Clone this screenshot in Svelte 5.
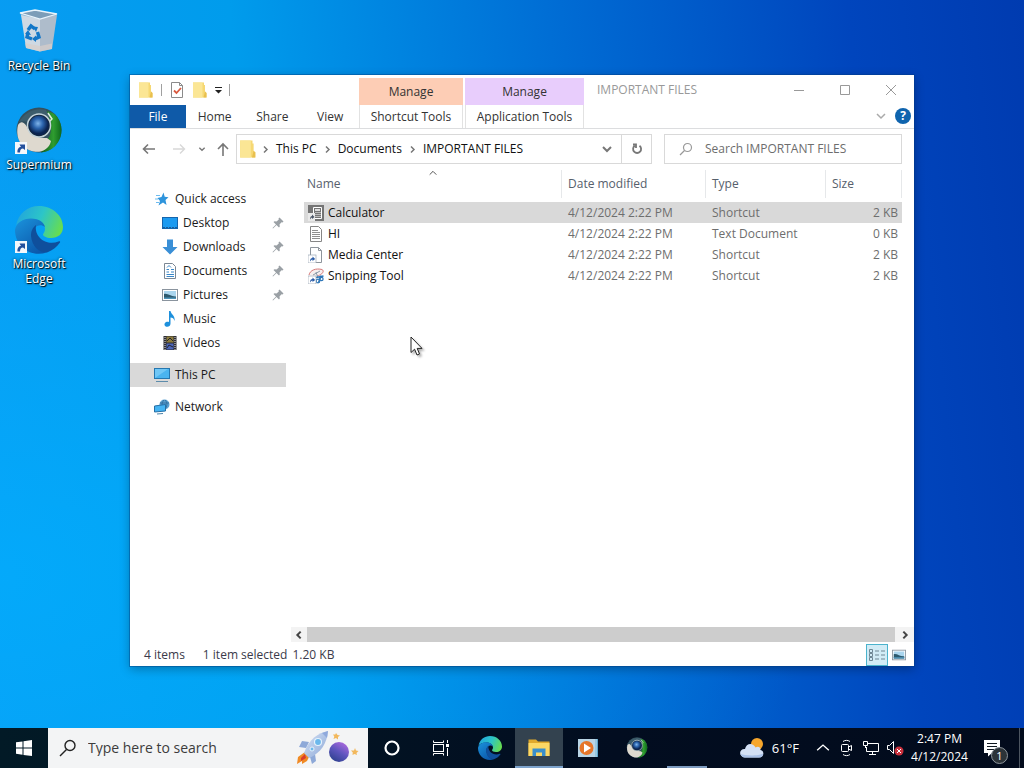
<script lang="ts">
    type Place = { name: string, icon: string, level: number, pinned?: boolean, gap?: boolean }

    const shortcuts = [
        { name: 'Recycle Bin', icon: 'bin', link: false },
        { name: 'Supermium', icon: 'supermium', link: true },
        { name: 'Microsoft Edge', icon: 'edge', link: true },
    ]

    const places: Place[] = [
        { name: 'Quick access', icon: 'star', level: 0 },
        { name: 'Desktop', icon: 'desktop', level: 1, pinned: true },
        { name: 'Downloads', icon: 'download', level: 1, pinned: true },
        { name: 'Documents', icon: 'document', level: 1, pinned: true },
        { name: 'Pictures', icon: 'picture', level: 1, pinned: true },
        { name: 'Music', icon: 'music', level: 1 },
        { name: 'Videos', icon: 'video', level: 1 },
        { name: 'This PC', icon: 'pc', level: 0, gap: true },
        { name: 'Network', icon: 'network', level: 0, gap: true },
    ]

    const files = [
        { name: 'Calculator', icon: 'calculator', date: '4/12/2024 2:22 PM', type: 'Shortcut', size: '2 KB' },
        { name: 'HI', icon: 'text', date: '4/12/2024 2:22 PM', type: 'Text Document', size: '0 KB' },
        { name: 'Media Center', icon: 'blank', date: '4/12/2024 2:22 PM', type: 'Shortcut', size: '2 KB' },
        { name: 'Snipping Tool', icon: 'snip', date: '4/12/2024 2:22 PM', type: 'Shortcut', size: '2 KB' },
    ]

    const path = ['This PC', 'Documents', 'IMPORTANT FILES']

    const apps = [
        { name: 'Cortana', icon: 'cortana', size: 18 },
        { name: 'Task View', icon: 'taskview', size: 18 },
        { name: 'Microsoft Edge', icon: 'edge', size: 24 },
        { name: 'File Explorer', icon: 'explorer', size: 24, active: true },
        { name: 'Media Player', icon: 'media', size: 22 },
        { name: 'Supermium', icon: 'supermium', size: 22 },
        { name: 'Running app', icon: 'none', size: 24, running: true },
    ]

    let selected = $state('Calculator')
    let place = $state('This PC')
    let fileSearch = $state('')
    let webSearch = $state('')
</script>

{#snippet arrowBadge()}
    <rect x="0" y="8" width="8" height="8" fill="#fff" stroke="#9aa7b5" stroke-width=".7"/>
    <path d="M2 14.5C2 12 3 11 4.500 11V9.500L7.200 12 4.500 14V12.500C3.500 12.500 3 13.200 2 14.500Z" fill="#2a5ca8"/>
{/snippet}

{#snippet icon(name: string, size: number)}
    {#if name == 'bin'}
        <svg width={size} height={size} viewBox="0 0 48 48" aria-hidden="true">
            <path d="M5 5 20 2 42 6 39 11 24 13 7 9Z" fill="#8fb9d8"/>
            <path d="M6 7 25 11V43.500L11 40Z" fill="#cfd9e3"/>
            <path d="M25 11 42 7 37 41 25 43.500Z" fill="#aebccb"/>
            <path d="M5 5 20 2 42 6 25 11Z" fill="#7c9db8" stroke="#e9f4fb" stroke-width="1.300"/>
            <path d="M10 35 25 38 37 35.500 37 41 25 43.500 11 40Z" fill="#d8cfc9" opacity=".7"/>
            <g fill="none" stroke="#1478c8" stroke-width="3.400">
                <path d="M13 22 16 18 20 21"/>
                <path d="M22.500 24 24 29 20 31"/>
                <path d="M17 31 12 29 13 25"/>
            </g>
            <path d="M18 18.500 23 19 21 24ZM21 27.500 21 34 17 31ZM10 26 13 22 16 27Z" fill="#1478c8"/>
        </svg>
    {:else if name == 'supermium'}
        <svg width={size} height={size} viewBox="0 0 48 48" aria-hidden="true">
            <defs>
                <radialGradient id="orb" cx=".45" cy=".4">
                    <stop offset="0" stop-color="#7fb4ea"/><stop offset=".5" stop-color="#2a63ac"/><stop offset="1" stop-color="#0b2350"/>
                </radialGradient>
                <linearGradient id="leaf" x1="0" x2="1">
                    <stop offset="0" stop-color="#0f5c1c"/><stop offset=".6" stop-color="#2f9d30"/><stop offset="1" stop-color="#0e6a1b"/>
                </linearGradient>
            </defs>
            <circle cx="24" cy="23" r="22.500" fill="#34505e"/>
            <path d="M31 4C43 5 49 18 45.500 30 42 40 34 45 26 45.500L35 28C37 20 36 13 31 4Z" fill="url(#leaf)"/>
            <path d="M3 18C7 12 11 17 14 24 18 30 25 31 32 31L36 34C34 43 25 46 19 44.500 6 42 0 31 3 18Z" fill="#ded9cf"/>
            <path d="M4 15C10 5 20 0 31 3 34 8 35 10 34 12 28 5 18 7 14 15 10 14 7 14 4 15Z" fill="#3d5d6c"/>
            <path d="M33 6 37 12 34 15" fill="none" stroke="#dceedd" stroke-width="1.500"/>
            <circle cx="24" cy="18.500" r="11.500" fill="#14283a" stroke="#c4d3da" stroke-width="1.500"/>
            <circle cx="24" cy="18.500" r="10" fill="url(#orb)"/>
        </svg>
    {:else if name == 'edge'}
        <svg width={size} height={size} viewBox="0 0 48 48" aria-hidden="true">
            <defs>
                <linearGradient id="edge-top" x1="0" y1=".3" x2="1" y2=".6">
                    <stop offset="0" stop-color="#22a5dc"/><stop offset=".5" stop-color="#2cc5c8"/><stop offset="1" stop-color="#68dd4e"/>
                </linearGradient>
                <linearGradient id="edge-side" x1="0" y1="0" x2=".7" y2="1">
                    <stop offset="0" stop-color="#1b93dc"/><stop offset="1" stop-color="#0b57aa"/>
                </linearGradient>
            </defs>
            <path d="M1 20C3 7 13 0 24 0 38 0 48 10 48 21 48 28 43 32 36 32 31 32 28 30 28 28.500 28 27.500 30 26 30 23 30 18 25 13 17 13 9 13 3 16 1 20Z" fill="url(#edge-top)"/>
            <path d="M0 24C1 17 8 12.500 16 12.500 24 12.500 29 16.500 30 21 24 16 17 22 17 29 17 38 24 46 32 46.500 15 52 0 40 0 24Z" fill="url(#edge-side)"/>
            <path d="M21 19C17 22 16 26 16 30 17 40 24 47 32 46.500 38 44 42 41 45 36.500 45.500 35.500 44.500 35 43.500 35.500 32 40 19 32 21 19Z" fill="#0f4f9c"/>
        </svg>
    {:else if name == 'folder'}
        <svg width={size} height={size} viewBox="0 0 16 16" aria-hidden="true">
            <path d="M1 .5H12V3H13V9.500L14.500 11V15.500H1Z" fill="#f6d873"/>
            <path d="M1 .5H10.500V15.500H1Z" fill="#fbe695"/>
            <path d="M13 9.500 14.500 11V15.500H11.500Z" fill="#e9c04f"/>
        </svg>
    {:else if name == 'check'}
        <svg width={size} height={size} viewBox="0 0 16 16" aria-hidden="true">
            <path d="M2.500 .5H10.500L13.500 3.500V15.500H2.500Z" fill="#fff" stroke="#8a8a8a"/>
            <path d="M10.500 .5V3.500H13.500" fill="none" stroke="#8a8a8a"/>
            <path d="M5 8.500 7.500 11 12 6" fill="none" stroke="#d9593f" stroke-width="1.800"/>
        </svg>
    {:else if name == 'star'}
        <svg width={size} height={size} viewBox="0 0 16 16" aria-hidden="true">
            <path d="M9.500 1.500 10.700 5.700 14.500 6.200 11.500 9 12.500 14 9 11.500 4.500 14.500 6 10 3.500 7 7.500 6Z" fill="#2e94dc"/>
            <path d="M2 4.500H6M1 8H4M2 11.500H5" stroke="#6dbcf0"/>
        </svg>
    {:else if name == 'desktop'}
        <svg width={size} height={size} viewBox="0 0 16 16" aria-hidden="true">
            <rect x=".5" y="2.500" width="15" height="11" fill="#1d9bf0" stroke="#1565ad"/>
            <path d="M1 12.500H15" stroke="#1b5d96" stroke-dasharray="2 1"/>
        </svg>
    {:else if name == 'download'}
        <svg width={size} height={size} viewBox="0 0 16 16" aria-hidden="true">
            <path d="M5 .5H11V8H15.500L8 15.500 .5 8H5Z" fill="#3a8fd6"/>
        </svg>
    {:else if name == 'document'}
        <svg width={size} height={size} viewBox="0 0 16 16" aria-hidden="true">
            <path d="M2.500 .5H10.500L13.500 3.500V15.500H2.500Z" fill="#fff" stroke="#7b8794"/>
            <path d="M4.500 6.500H7M9 6.500H12M4.500 9H7M9 9H12M4.500 11.500H12M4.500 13.500H12M5 4.500 7 2.500 9 4.500" fill="none" stroke="#3a87c8"/>
        </svg>
    {:else if name == 'picture'}
        <svg width={size} height={size} viewBox="0 0 16 16" aria-hidden="true">
            <rect x=".5" y="2.500" width="15" height="11" fill="#fff" stroke="#8a949e"/>
            <path d="M2 4H14V12H2Z" fill="#a9d5ee"/>
            <path d="M2 7C6 6 9 10 14 9.500V12H2Z" fill="#2d5a6e"/>
            <path d="M2 10.500H14V12H2Z" fill="#4d93b8"/>
        </svg>
    {:else if name == 'music'}
        <svg width={size} height={size} viewBox="0 0 16 16" aria-hidden="true">
            <path d="M7 0H8.500C9 3.500 13.500 4.500 12.500 10 12 7.500 10.500 6.500 8.500 6.500V12.500C8.500 17 2 16.500 2.500 13 3 10.800 5.500 10.500 7 11Z" fill="#1e90dc"/>
        </svg>
    {:else if name == 'video'}
        <svg width={size} height={size} viewBox="0 0 16 16" aria-hidden="true">
            <rect x="1.500" y="1" width="13" height="14" fill="#2c2c33"/>
            <path d="M4.500 1.500H11.500V7.500H4.500Z" fill="#8b7a3c"/>
            <path d="M4.500 8.500H11.500V14.500H4.500Z" fill="#4a64b8"/>
            <path d="M5 6 8 3 11 6M5 13 7 10 11 12" fill="none" stroke="#22242e"/>
            <path d="M3 2V15M13 2V15" stroke="#e2e2e2" stroke-dasharray="1 1"/>
        </svg>
    {:else if name == 'pc'}
        <svg width={size} height={size} viewBox="0 0 16 16" aria-hidden="true">
            <rect x=".5" y="1.500" width="15" height="10" fill="#4ab4f0" stroke="#2577b0"/>
            <path d="M1 11V2H14Z" fill="#8ad4fa" opacity=".6"/>
            <path d="M2 14.500H14" stroke="#5d8cab"/>
        </svg>
    {:else if name == 'network'}
        <svg width={size} height={size} viewBox="0 0 16 16" aria-hidden="true">
            <circle cx="10.500" cy="5.500" r="5" fill="#5a9fd0"/>
            <path d="M6 4H15M10 1C7 4 8 8 10 10M11 1C14 4 13 8 11 10" fill="none" stroke="#2c6797" stroke-width=".8"/>
            <path d="M.5 7 11.500 5.500V12L.5 13Z" fill="#45b4f3" stroke="#256fa6"/>
            <path d="M3 15 9 14.500" stroke="#4b83a9"/>
        </svg>
    {:else if name == 'calculator'}
        <svg width={size} height={size} viewBox="0 0 16 16" aria-hidden="true">
            <path d="M0 0H16V16H0Z" fill="#747474"/>
            <path d="M5.500 2.500H13.500V13.500H5.500Z" fill="none" stroke="#fff"/>
            <path d="M7 5H12" stroke="#fff" stroke-width="1.500"/>
            <path d="M8 7V12M10 7V12M12 7V12" stroke="#fff" stroke-dasharray="1 1"/>
            <rect x="0" y="8" width="7" height="8" fill="#e9e9e9"/>
            <path d="M2 14.500C2 12 3 11 4 11V9.500L6.500 12 4 14V12.500C3.500 12.500 3 13.200 2 14.500Z" fill="#4a5566"/>
        </svg>
    {:else if name == 'text'}
        <svg width={size} height={size} viewBox="0 0 16 16" aria-hidden="true">
            <path d="M2.500 .5H10.500L13.500 3.500V15.500H2.500Z" fill="#fff" stroke="#868686"/>
            <path d="M4 4.500H10M4 6.500H12M4 8.500H12M4 10.500H12M4 12.500H12" stroke="#8f8f8f"/>
        </svg>
    {:else if name == 'blank'}
        <svg width={size} height={size} viewBox="0 0 16 16" aria-hidden="true">
            <path d="M2.500 .5H10.500L13.500 3.500V15.500H2.500Z" fill="#fff" stroke="#8e959c"/>
            <path d="M10.500 .5V3.500H13.500" fill="none" stroke="#8e959c"/>
            {@render arrowBadge()}
        </svg>
    {:else if name == 'snip'}
        <svg width={size} height={size} viewBox="0 0 16 16" aria-hidden="true">
            <path d="M1 7C2 2 8 0 14 1.500 17 3 14 7 9 8" fill="#f7eeee" stroke="#d77a7a"/>
            <path d="M5 7 12 3M8 4 10 10" stroke="#8b9aa8"/>
            <path d="M8 9.500 15.500 8M10.500 14.500 13 7.500" stroke="#2d76b8" stroke-width="1.400"/>
            <circle cx="10" cy="13" r="1.800" fill="none" stroke="#2d76b8" stroke-width="1.200"/>
            <circle cx="13.500" cy="11" r="1.600" fill="none" stroke="#2d76b8" stroke-width="1.200"/>
            {@render arrowBadge()}
        </svg>
    {:else if name == 'cortana'}
        <svg width={size} height={size} viewBox="0 0 18 18" aria-hidden="true">
            <circle cx="9" cy="9" r="6.500" fill="none" stroke="#fff" stroke-width="2.200"/>
        </svg>
    {:else if name == 'taskview'}
        <svg width={size} height={size} viewBox="0 0 18 18" fill="none" stroke="#fff" aria-hidden="true">
            <rect x="1.500" y="5.500" width="10" height="7"/>
            <path d="M1.500 1.500V3.500H11.500V1.500M1.500 16.500V14.500H11.500V16.500M15.500 1V4M15.500 9V17"/>
            <path d="M14 5H17V8H14Z" fill="#fff" stroke="none"/>
        </svg>
    {:else if name == 'explorer'}
        <svg width={size} height={size} viewBox="0 0 24 24" aria-hidden="true">
            <path d="M1.500 3.500H9L11 5.500H22.500V20H1.500Z" fill="#e0a92c"/>
            <path d="M1.500 7H22.500V20H1.500Z" fill="#fcd865"/>
            <path d="M5.500 20V12.500H18.500V20H15V16.500H9V20Z" fill="#3a8fcb"/>
        </svg>
    {:else if name == 'media'}
        <svg width={size} height={size} viewBox="0 0 22 22" aria-hidden="true">
            <rect x="3" y="2" width="18" height="18" fill="#5ba4cb"/>
            <rect x="1" y="2" width="17" height="18" fill="#b9d5e6"/>
            <path d="M19 2V20" stroke="#d7edf7"/>
            <circle cx="9.500" cy="11" r="7" fill="#e5762a"/>
            <path d="M7 6.500 14 11 7 15.500Z" fill="#fff"/>
        </svg>
    {/if}
{/snippet}

{#snippet chevron(d: string, size: number, width: number)}
    <svg width={size} height={size} viewBox="0 0 12 12" fill="none" stroke="currentColor" stroke-width={width} aria-hidden="true"><path {d}/></svg>
{/snippet}

<div class="screen">
    <main class="desktop">
        <div class="shortcuts">
            {#each shortcuts as s}
                <button class="shortcut">
                    <span class="shortcut-icon">
                        {@render icon(s.icon, 48)}
                        {#if s.link}
                            <svg class="link-badge" width="12" height="12" viewBox="0 0 12 12" aria-hidden="true">
                                <rect width="12" height="12" fill="#f4f7fb"/>
                                <path d="M2.500 10.500C2 7 4 5 6 5L4.500 2.500H10V8L8 6.500C6 6.500 5 8 5 10.500Z" fill="#234f9c"/>
                            </svg>
                        {/if}
                    </span>
                    <span class="shortcut-name">{s.name}</span>
                </button>
            {/each}
        </div>

        <section class="window" aria-label="IMPORTANT FILES">
            <header class="ribbon">
                <div class="ribbon-left">
                    <div class="quick">
                        {@render icon('folder', 16)}
                        <span class="rule"></span>
                        <button aria-label="Properties">{@render icon('check', 16)}</button>
                        <button aria-label="New folder">{@render icon('folder', 16)}</button>
                        <button aria-label="Customize toolbar">
                            <svg width="7" height="8" viewBox="0 0 7 8" aria-hidden="true"><path d="M0 1H7V2H0ZM0 4H7L3.500 7.500Z" fill="#222"/></svg>
                        </button>
                        <span class="rule"></span>
                    </div>
                    <nav class="tabs">
                        <button class="file">File</button>
                        <button class="tab">Home</button>
                        <button class="tab">Share</button>
                        <button class="tab">View</button>
                    </nav>
                </div>
                <div class="context shortcut-tools">
                    <span class="context-head">Manage</span>
                    <button class="context-tab">Shortcut Tools</button>
                </div>
                <div class="context app-tools">
                    <span class="context-head">Manage</span>
                    <button class="context-tab">Application Tools</button>
                </div>
                <div class="ribbon-right">
                    <div class="title-row">
                        <h1>IMPORTANT FILES</h1>
                        <button class="caption" aria-label="Minimize">
                            <svg width="12" height="12" viewBox="0 0 12 12" stroke="#999" fill="none"><path d="M1 6.500H11"/></svg>
                        </button>
                        <button class="caption" aria-label="Maximize">
                            <svg width="12" height="12" viewBox="0 0 12 12" stroke="#999" fill="none"><path d="M1.500 1.500H10.500V10.500H1.500Z"/></svg>
                        </button>
                        <button class="caption" aria-label="Close">
                            <svg width="12" height="12" viewBox="0 0 12 12" stroke="#999" fill="none"><path d="M1 1 11 11M11 1 1 11"/></svg>
                        </button>
                    </div>
                    <div class="help-row">
                        <button class="expand" aria-label="Expand the ribbon">{@render chevron('M2 4 6 8 10 4', 12, 1.5)}</button>
                        <button class="help" aria-label="Help">?</button>
                    </div>
                </div>
            </header>

            <div class="nav-row">
                <button class="nav wide" aria-label="Back">
                    <svg width="14" height="14" viewBox="0 0 14 14" fill="none" stroke="#777" stroke-width="1.600"><path d="M1.500 7H13M6 2.500 1.500 7 6 11.500"/></svg>
                </button>
                <button class="nav wide" aria-label="Forward">
                    <svg width="14" height="14" viewBox="0 0 14 14" fill="none" stroke="#d8d8d8" stroke-width="1.400"><path d="M1 7H12.500M8 2.500 12.500 7 8 11.500"/></svg>
                </button>
                <button class="nav recent" aria-label="Recent locations">{@render chevron('M2 4 6 8 10 4', 8, 2)}</button>
                <button class="nav up" aria-label="Up">
                    <svg width="14" height="14" viewBox="0 0 14 14" fill="none" stroke="#777" stroke-width="1.600"><path d="M7 2V14M2 7 7 2 12 7"/></svg>
                </button>
                <div class="address">
                    {@render icon('folder', 18)}
                    {#each path as part}
                        <span class="crumb-mark">{@render chevron('M4 2 8 6 4 10', 9, 2)}</span>
                        <button class="crumb">{part}</button>
                    {/each}
                    <button class="address-drop" aria-label="Previous locations">{@render chevron('M2 4 6 8 10 4', 12, 2)}</button>
                    <button class="refresh" aria-label="Refresh">
                        <svg width="14" height="14" viewBox="0 0 14 14" fill="none" stroke="#777" stroke-width="1.800"><path d="M9.500 3.800A4 4 0 1 1 4.700 3.800M3 2.500H6V6"/></svg>
                    </button>
                </div>
                <label class="file-search">
                    <svg width="14" height="14" viewBox="0 0 14 14" fill="none" stroke="#999" stroke-width="1.200" aria-hidden="true"><circle cx="8.500" cy="5.500" r="4"/><path d="M5.500 8.500 1 13"/></svg>
                    <input type="text" aria-label="Search IMPORTANT FILES" placeholder="Search IMPORTANT FILES" bind:value={fileSearch}>
                </label>
            </div>

            <div class="body">
                <nav class="places">
                    {#each places as p}
                        <button
                            class="place"
                            class:child={p.level == 1}
                            class:gap={p.gap}
                            class:current={p.name == place}
                            onclick={() => place = p.name}
                        >
                            {@render icon(p.icon, 16)}
                            <span class="place-name">{p.name}</span>
                            {#if p.pinned}
                                <svg width="12" height="12" viewBox="0 0 12 12" aria-hidden="true"><path d="M7.500 .5 11.500 4.500 10.500 5.500 9.500 5.200 7.500 7.500 7.800 9.500 7 10.500 4.500 8 1 11.500 .5 11 4 7.500 1.500 5 2.500 4.200 4.500 4.500 6.800 2.500 6.500 1.500Z" fill="#9aa0a5"/></svg>
                            {/if}
                        </button>
                    {/each}
                </nav>
                <div class="listing">
                    <div class="table-area">
                        <table>
                            <colgroup>
                                <col><col class="col-date"><col class="col-type"><col class="col-size">
                            </colgroup>
                            <thead>
                                <tr>
                                    <th class="name">Name<span class="sort">{@render chevron('M2 8 6 4 10 8', 10, 1.2)}</span></th>
                                    <th>Date modified</th>
                                    <th>Type</th>
                                    <th>Size</th>
                                </tr>
                            </thead>
                            <tbody>
                                {#each files as f}
                                    <tr class:selected={f.name == selected} onclick={() => selected = f.name}>
                                        <td class="name"><span class="file-name">{@render icon(f.icon, 16)}{f.name}</span></td>
                                        <td>{f.date}</td>
                                        <td>{f.type}</td>
                                        <td class="size">{f.size}</td>
                                    </tr>
                                {/each}
                            </tbody>
                        </table>
                    </div>
                    <div class="scrollbar">
                        <button aria-label="Scroll left">{@render chevron('M8 2 4 6 8 10', 10, 2.4)}</button>
                        <div class="thumb"></div>
                        <button class="right" aria-label="Scroll right">{@render chevron('M4 2 8 6 4 10', 10, 2.4)}</button>
                    </div>
                </div>
            </div>

            <footer class="status">
                <span class="count">4 items</span>
                <span class="picked">1 item selected</span>
                <span>1.20 KB</span>
                <button class="view details" aria-label="Details view">
                    <svg width="18" height="14" viewBox="0 0 18 14" fill="none" stroke="#6f8794" aria-hidden="true"><path d="M1.500 1.500H4.500V4.500H1.500ZM1.500 5.500H4.500V8.500H1.500ZM1.500 9.500H4.500V12.500H1.500Z"/><path d="M7 3H11M13 3H17M7 7H11M13 7H17M7 11H11M13 11H17"/></svg>
                </button>
                <button class="view" aria-label="Large icons view">{@render icon('picture', 14)}</button>
            </footer>
        </section>

        <svg class="pointer" width="14" height="21" viewBox="0 0 14 21" aria-hidden="true">
            <path d="M1 1V16.500L4.600 13.200 7 19 9.500 18 7.200 12.400H12Z" fill="#fff" stroke="#222"/>
        </svg>
    </main>

    <footer class="taskbar">
        <button class="start" aria-label="Start">
            <svg width="16" height="16" viewBox="0 0 16 16" fill="#fff" aria-hidden="true"><path d="M0 2.300 6.500 1.400V7.600H0ZM7.500 1.200 16 0V7.600H7.500ZM0 8.500H6.500V14.700L0 13.800ZM7.500 8.500H16V16L7.500 14.900Z"/></svg>
        </button>
        <label class="web-search">
            <svg width="18" height="18" viewBox="0 0 18 18" fill="none" stroke="#222" stroke-width="1.400" aria-hidden="true"><circle cx="11" cy="6.500" r="5"/><path d="M7.500 10.500 1 17"/></svg>
            <input type="text" aria-label="Type here to search" placeholder="Type here to search" bind:value={webSearch}>
            <svg width="64" height="36" viewBox="0 0 64 36" aria-hidden="true">
                <defs>
                    <linearGradient id="hull" x1="0" y1="0" x2="1" y2="1">
                        <stop offset="0" stop-color="#d5e2f5"/><stop offset="1" stop-color="#8ea9d8"/>
                    </linearGradient>
                    <linearGradient id="planet" x1=".8" y1="0" x2=".2" y2="1">
                        <stop offset="0" stop-color="#b06be0"/><stop offset=".5" stop-color="#5d55bd"/><stop offset="1" stop-color="#2b3f8c"/>
                    </linearGradient>
                </defs>
                <path d="M9 22 2 27 1 34 6 31 6 34 11 31 13 27Z" fill="#f08a24"/>
                <path d="M9 24 5 28 5 31 10 28Z" fill="#d83c2c"/>
                <path d="M13 12 6 11 3 17 10 18ZM19 24 20 31 16 34 14 27Z" fill="#8ea9d8"/>
                <path d="M32 1C22 3 13 9 8 23L13 28C25 23 31 13 32 1Z" fill="url(#hull)"/>
                <path d="M32 1 26 3 31 8Z" fill="#8fa9dc"/>
                <circle cx="22" cy="12" r="3.500" fill="#6bb8ec" stroke="#e6f2fc" stroke-width="1.200"/>
                <circle cx="16" cy="19" r="2" fill="#6bb8ec" stroke="#e6f2fc"/>
                <circle cx="43" cy="22" r="10" fill="url(#planet)"/>
                <path d="M40 3 41.500 5 44 5.500 42 7 42 9.500 40 8 37.500 9 38.300 6.500 37 4.500 39.300 4.500ZM59 18 60 20.500 62.500 21 60.500 23 61 25 58.500 24 56.500 25 56.800 22.500 55 20.500 58 20.500Z" fill="#f2b85c"/>
            </svg>
        </label>
        {#each apps as a}
            <button class="app" class:active={a.active} class:running={a.running} aria-label={a.name}>{@render icon(a.icon, a.size)}</button>
        {/each}
        <div class="tray">
            <button class="weather">
                <svg width="26" height="22" viewBox="0 0 26 22" aria-hidden="true">
                    <circle cx="18" cy="7" r="6" fill="#f6a62c"/>
                    <path d="M6 20.500C-1 20 0 11.500 6 12 7 6 14 5 16.500 10.500 19 9 21.500 10 21.500 13 26 14 25 20.500 20 20.500Z" fill="#d3e0f5"/>
                    <path d="M1.500 17C2.500 20 5 20.500 6 20.500H20C23 20.500 24.300 18.500 24 16.500 20 19 6 19 1.500 17Z" fill="#a9c1e8"/>
                </svg>
                <span>61°F</span>
            </button>
            <button class="tray-icon" aria-label="Show hidden icons">{@render chevron('M1 8 6 3.500 11 8', 14, 1.2)}</button>
            <button class="tray-icon" aria-label="Camera">
                <svg width="14" height="18" viewBox="0 0 14 18" fill="none" stroke="#fff" aria-hidden="true"><rect x="1.500" y="5.500" width="7" height="7" rx="1"/><path d="M8.500 8 11.500 6.500V11.500L8.500 10M3 2.500C5 1 8 1 10 2.500M3 15.500C5 17 8 17 10 15.500"/></svg>
            </button>
            <button class="tray-icon" aria-label="Network">
                <svg width="18" height="16" viewBox="0 0 18 16" fill="none" stroke="#fff" aria-hidden="true"><path d="M6 3.500H16.500V11.500H4.500V7M10.500 11.500V14.500M7 14.500H14M1.500 1.500H5.500V5.500H1.500ZM3.500 5.500V8"/></svg>
            </button>
            <button class="tray-icon" aria-label="Volume muted">
                <svg width="18" height="16" viewBox="0 0 18 16" fill="none" stroke="#fff" aria-hidden="true"><path d="M1.500 5.500H3.500L7.500 1.500V13.500L3.500 9.500H1.500Z"/><circle cx="13" cy="11" r="4.500" fill="#c9303c" stroke="none"/><path d="M11 9 15 13M15 9 11 13"/></svg>
            </button>
            <button class="clock"><span>2:47 PM</span><span>4/12/2024</span></button>
            <button class="notes" aria-label="Notifications">
                <svg width="18" height="18" viewBox="0 0 18 18" aria-hidden="true"><path d="M1 1H17V14H9L5 17.500V14H1Z" fill="#fff"/><path d="M4 4.500H14M4 7.500H14M4 10.500H14" stroke="#101820"/></svg>
                <span class="badge">1</span>
            </button>
            <span class="peek"></span>
        </div>
    </footer>
</div>

<style>
    :global(body) {
        margin: 0;
    }
    .screen {
        min-height: 100vh;
        display: flex;
        flex-direction: column;
        font: 12px/16px "Segoe UI", "Open Sans", "Noto Sans", sans-serif;
        color: #1b1b1b;
        background:
            radial-gradient(ellipse 80% 60% at 0% 75%, rgba(0, 178, 255, .6), rgba(0, 178, 255, 0)),
            linear-gradient(84deg, #0a9cf4 0%, #009cec 28%, #006cd4 58%, #0045bd 84%, #003bb0 100%);
    }
    button {
        font: inherit;
        color: inherit;
        background: none;
        border: 0;
        padding: 0;
        margin: 0;
        display: flex;
        align-items: center;
        justify-content: center;
    }
    svg {
        display: block;
        flex: none;
    }
    input {
        font: inherit;
        color: inherit;
        background: none;
        border: 0;
        padding: 0;
        flex: 1;
        min-width: 0;
        outline: none;
    }

    .desktop {
        flex: 1;
        position: relative;
    }
    .shortcuts {
        width: 78px;
        display: flex;
        flex-direction: column;
        padding-top: 8px;
        gap: 16px;
    }
    .shortcut {
        flex-direction: column;
        justify-content: flex-start;
        gap: 2px;
        min-height: 83px;
        color: #fff;
        line-height: 15px;
        text-shadow: 1px 1px 1px #000, 0 0 3px rgba(0, 0, 0, .8);
    }
    .shortcut-icon {
        position: relative;
    }
    .link-badge {
        position: absolute;
        left: 0;
        bottom: 1px;
    }

    .window {
        position: absolute;
        left: 130px;
        right: 110px;
        top: 75px;
        bottom: 62px;
        display: flex;
        flex-direction: column;
        background: #fff;
        box-shadow: 0 0 0 1px rgba(0, 60, 130, .4), 0 3px 10px rgba(0, 0, 0, .3);
    }
    .ribbon {
        display: flex;
        height: 53px;
        border-bottom: 1px solid #dcdddf;
        color: #333;
    }
    .ribbon-left {
        width: 229px;
        display: flex;
        flex-direction: column;
    }
    .quick {
        height: 30px;
        display: flex;
        align-items: center;
        padding-left: 8px;
        gap: 7px;
    }
    .rule {
        width: 1px;
        height: 12px;
        background: #a0a0a0;
    }
    .tabs {
        display: flex;
        height: 23px;
    }
    .file {
        width: 56px;
        background: #0f5aa8;
        color: #fff;
    }
    .tab {
        width: 58px;
    }
    .context {
        display: flex;
        flex-direction: column;
        padding-top: 3px;
        margin-right: 2px;
    }
    .shortcut-tools {
        width: 104px;
    }
    .app-tools {
        width: 119px;
    }
    .context-head {
        height: 27px;
        line-height: 27px;
        text-align: center;
    }
    .shortcut-tools .context-head {
        background: #fdcdb5;
    }
    .app-tools .context-head {
        background: #e8cdfc;
    }
    .context-tab {
        flex: 1;
        border: solid #e2e2e2;
        border-width: 0 1px;
    }
    .ribbon-right {
        flex: 1;
        display: flex;
        flex-direction: column;
    }
    .title-row {
        display: flex;
        height: 29px;
        align-items: center;
    }
    h1 {
        flex: 1;
        margin: 0;
        padding-left: 11px;
        font-size: 12px;
        font-weight: 400;
        color: #999;
    }
    .caption {
        width: 46px;
        height: 29px;
    }
    .help-row {
        flex: 1;
        display: flex;
        align-items: center;
        justify-content: flex-end;
        padding-right: 3px;
        gap: 8px;
    }
    .expand {
        color: #aaa;
    }
    .help {
        width: 16px;
        height: 16px;
        border-radius: 50%;
        background: #0f64ae;
        color: #fff;
        font-weight: 700;
    }

    .nav-row {
        display: flex;
        align-items: center;
        height: 40px;
        padding: 0 12px 0 4px;
    }
    .nav {
        height: 28px;
        color: #777;
    }
    .wide {
        width: 30px;
    }
    .recent {
        width: 16px;
    }
    .up {
        width: 26px;
    }
    .address {
        flex: 1;
        display: flex;
        align-items: center;
        height: 28px;
        margin-right: 12px;
        border: 1px solid #d9d9d9;
        color: #111;
        padding-left: 2px;
    }
    .crumb-mark {
        display: flex;
        justify-content: center;
        width: 17px;
        color: #777;
    }
    .crumb {
        padding: 0 2px;
    }
    .address-drop {
        width: 28px;
        margin-left: auto;
        color: #777;
    }
    .refresh {
        width: 30px;
        height: 28px;
        border-left: 1px solid #d9d9d9;
    }
    .file-search {
        box-sizing: border-box;
        width: 238px;
        height: 30px;
        display: flex;
        align-items: center;
        gap: 12px;
        border: 1px solid #d9d9d9;
        padding-left: 14px;
    }
    .file-search input::placeholder {
        color: #6d6d6d;
        opacity: 1;
    }

    .body {
        flex: 1;
        display: flex;
        min-height: 0;
    }
    .places {
        width: 156px;
        padding-top: 18px;
        margin-right: 5px;
    }
    .place {
        width: 100%;
        height: 24px;
        justify-content: flex-start;
        gap: 5px;
        padding: 0 2px 0 24px;
    }
    .child {
        padding-left: 32px;
    }
    .gap {
        margin-top: 8px;
    }
    .current {
        background: #d9d9d9;
    }
    .place-name {
        flex: 1;
        text-align: left;
    }
    .listing {
        flex: 1;
        display: flex;
        flex-direction: column;
        min-width: 0;
    }
    .table-area {
        flex: 1;
        padding: 1px 12px 0 13px;
    }
    table {
        width: 100%;
        table-layout: fixed;
        border-collapse: separate;
        border-spacing: 0;
    }
    .col-date {
        width: 144px;
    }
    .col-type {
        width: 120px;
    }
    .col-size {
        width: 77px;
    }
    th {
        position: relative;
        height: 28px;
        padding: 0 0 0 6px;
        font-weight: 400;
        text-align: left;
        color: #56606c;
        border-left: 1px solid #e6e8ea;
    }
    th.name {
        padding-left: 3px;
        border-left: 0;
    }
    th:last-child {
        border-right: 1px solid #e6e8ea;
    }
    .sort {
        position: absolute;
        top: -2px;
        left: 50%;
        margin-left: -5px;
        color: #555;
    }
    td {
        height: 21px;
        padding: 0 0 0 7px;
        color: #6e6e6e;
    }
    td.name {
        padding-left: 4px;
        color: #111;
    }
    td.size {
        text-align: right;
        padding-right: 4px;
    }
    tbody::before {
        content: "";
        display: block;
        height: 4px;
    }
    .selected td {
        background: #d9d9d9;
    }
    .file-name {
        display: flex;
        align-items: center;
        gap: 4px;
    }
    .scrollbar {
        display: flex;
        height: 15px;
        margin-bottom: 2px;
        background: #f3f3f3;
        color: #444;
    }
    .scrollbar button {
        width: 16px;
    }
    .scrollbar .right {
        width: 19px;
    }
    .thumb {
        flex: 1;
        background: #cdcdcd;
    }

    .status {
        display: flex;
        align-items: center;
        height: 22px;
        padding: 0 4px 0 14px;
        color: #3a3a4a;
    }
    .count {
        margin-right: 18px;
    }
    .picked {
        margin-right: 5px;
    }
    .view {
        width: 22px;
        height: 22px;
    }
    .details {
        box-sizing: border-box;
        margin-left: auto;
        border: 1px solid #4bb3cd;
        background: #d1ecf6;
    }

    .pointer {
        position: absolute;
        left: 410px;
        top: 336px;
        filter: drop-shadow(2px 2px 1px rgba(0, 0, 0, .3));
    }

    .taskbar {
        display: flex;
        height: 40px;
        background: linear-gradient(90deg, #021a26, #020d20 60%, #020b1c);
        color: #fff;
    }
    .start {
        width: 48px;
    }
    .web-search {
        box-sizing: border-box;
        width: 320px;
        display: flex;
        align-items: center;
        gap: 11px;
        padding: 0 8px 0 11px;
        background: #f3f4f5;
        color: #333;
        font-size: 14px;
    }
    .web-search input::placeholder {
        color: #3c3c3c;
        opacity: 1;
    }
    .app {
        box-sizing: border-box;
        width: 48px;
        height: 40px;
        margin-right: 1px;
    }
    .active {
        background: #33424f;
        border-bottom: 2px solid #7da3cc;
        padding-top: 2px;
    }
    .running {
        width: 40px;
        margin-left: 5px;
        border-bottom: 2px solid #7d9bc0;
    }
    .tray {
        margin-left: auto;
        display: flex;
        align-items: center;
    }
    .weather {
        gap: 7px;
        font-size: 13px;
        margin-right: 12px;
    }
    .tray-icon {
        width: 24px;
        height: 40px;
    }
    .clock {
        flex-direction: column;
        width: 65px;
        line-height: 18px;
    }
    .notes {
        position: relative;
        width: 40px;
        height: 40px;
    }
    .badge {
        position: absolute;
        left: 19px;
        top: 19px;
        width: 15px;
        height: 15px;
        border: 1px solid #8d959c;
        border-radius: 50%;
        background: #2c3338;
        font-size: 11px;
        line-height: 15px;
    }
    .peek {
        width: 1px;
        height: 40px;
        margin: 0 4px 0 7px;
        background: #4c5560;
    }
</style>
